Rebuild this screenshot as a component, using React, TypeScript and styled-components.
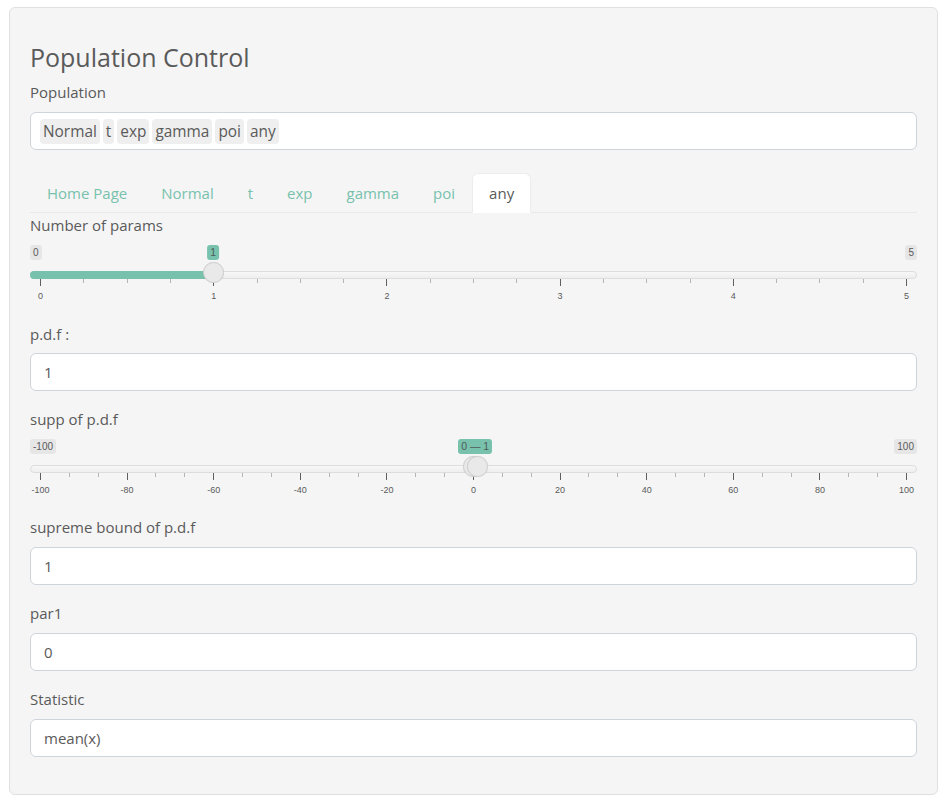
import React from "react";
import styled, { createGlobalStyle } from "styled-components";

const GlobalStyle = createGlobalStyle`
  html, body { margin: 0; padding: 0; background: #ffffff; }
  body {
    font-family: "Open Sans", "Noto Sans", "Liberation Sans", sans-serif;
    color: #5a5a5a;
  }
  * { box-sizing: border-box; }
`;

const Page = styled.div`
  padding: 7px 4px 6px 9px;
`;

const Panel = styled.div`
  display: flex;
  flex-direction: column;
  background: #f5f5f5;
  border: 1px solid #e0e0e0;
  border-radius: 6px;
  padding: 34px 20px 37px;
`;

const Title = styled.h3`
  margin: 0 0 8px;
  font-size: 25px;
  font-weight: 500;
  line-height: 31px;
  color: #5a5a5a;
`;

const Stack = styled.div`
  display: flex;
  flex-direction: column;
  gap: 17px;
`;

const Field = styled.div<{ $extra?: number }>`
  display: flex;
  flex-direction: column;
  padding-bottom: ${(p) => p.$extra ?? 0}px;
`;

const Label = styled.label<{ $mb?: number }>`
  display: block;
  font-size: 15px;
  line-height: 22px;
  margin-bottom: ${(p) => (p.$mb ?? 9)}px;
  color: #5a5a5a;
`;

const TextInput = styled.input`
  display: block;
  width: 100%;
  height: 38px;
  border: 1px solid #ced4da;
  border-radius: 6px;
  background: #ffffff;
  padding: 0 13px;
  font-family: inherit;
  font-size: 15px;
  color: #5a5a5a;
  outline: none;
`;

const SelectBox = styled.div`
  display: flex;
  align-items: center;
  gap: 3px;
  height: 38px;
  border: 1px solid #ced4da;
  border-radius: 6px;
  background: #ffffff;
  padding: 0 9px;
`;

const Chip = styled.span`
  display: inline-block;
  height: 25px;
  line-height: 25px;
  padding: 0 3px;
  border-radius: 4px;
  background: #efefef;
  font-size: 15.4px;
  color: #5a5a5a;
`;

const TabList = styled.ul`
  display: flex;
  list-style: none;
  margin: 17px 0 0;
  padding: 0;
  border-bottom: 1px solid #e9e9e9;
`;

const Tab = styled.li<{ $active?: boolean }>`
  padding: 8px 16px;
  margin-bottom: -1px;
  border: 1px solid ${(p) => (p.$active ? "#ececec" : "transparent")};
  border-bottom-color: ${(p) => (p.$active ? "#ffffff" : "transparent")};
  border-radius: 6px 6px 0 0;
  background: ${(p) => (p.$active ? "#ffffff" : "transparent")};
  font-size: 15px;
  line-height: 22px;
  color: ${(p) => (p.$active ? "#5a5a5a" : "#78c2ad")};
`;

const TabBody = styled(Stack)`
  padding-top: 1px;
`;

/* ---------- slider (ion.rangeSlider look) ---------- */

const SliderWrap = styled.div`
  position: relative;
  height: 65px;
  font-family: "Liberation Sans", Arial, sans-serif;
`;

const EdgeTag = styled.span<{ $side: "left" | "right" }>`
  position: absolute;
  top: 9px;
  ${(p) => (p.$side === "left" ? "left: 0;" : "right: 0;")}
  height: 15px;
  line-height: 15px;
  padding: 0 3px;
  font-size: 10px;
  color: #5a5a5a;
  background: #e6e6e6;
  border-radius: 3px;
`;

const ValueTag = styled.span`
  position: absolute;
  top: 9px;
  transform: translateX(-50%);
  height: 15px;
  line-height: 15px;
  padding: 0 3px;
  font-size: 10.5px;
  color: #4f5b57;
  background: #78c2ad;
  border-radius: 3px;
  white-space: nowrap;
`;

const Track = styled.div`
  position: absolute;
  top: 35px;
  left: 0;
  right: 0;
  height: 8px;
  border: 1px solid #dddddd;
  border-radius: 4px;
  background: linear-gradient(#f7f7f7, #eeeeee);
`;

const Bar = styled.div`
  position: absolute;
  top: 35px;
  height: 8px;
  background: #78c2ad;
  border-radius: 4px;
`;

const Handle = styled.div`
  position: absolute;
  top: 26px;
  width: 21px;
  height: 21px;
  margin-left: -10.5px;
  border-radius: 50%;
  background: #e9e9e9;
  border: 1px solid #cfcfcf;
  box-shadow: 0 0 1px rgba(0, 0, 0, 0.1);
`;

const Grid = styled.div`
  position: absolute;
  top: 43px;
  left: 10px;
  right: 11px;
  height: 22px;
`;

const Tick = styled.span<{ $major?: boolean }>`
  position: absolute;
  top: 0;
  width: 1px;
  height: ${(p) => (p.$major ? 7 : 4)}px;
  background: ${(p) => (p.$major ? "#5f5f5f" : "#b5b5b5")};
`;

const TickText = styled.span`
  position: absolute;
  top: 12px;
  transform: translateX(-50%);
  font-size: 9px;
  line-height: 11px;
  color: #5a5a5a;
  white-space: nowrap;
`;

type SliderProps = {
  min: number;
  max: number;
  values: number[];
  majors: number;
  minorsPer: number;
};

const pos = (p: number) => `calc(10px + (100% - 21px) * ${p})`;

function Slider({ min, max, values, majors, minorsPer }: SliderProps) {
  const frac = (v: number) => (v - min) / (max - min);
  const ticks: { p: number; major: boolean; label?: string }[] = [];
  const steps = majors * (minorsPer + 1);
  for (let i = 0; i <= steps; i++) {
    const major = i % (minorsPer + 1) === 0;
    const v = min + ((max - min) * i) / steps;
    ticks.push({ p: i / steps, major, label: major ? String(Math.round(v)) : undefined });
  }
  const isRange = values.length > 1;
  const a = frac(values[0]);
  const b = isRange ? frac(values[1]) : a;
  const tagText = isRange ? `${values[0]} \u2014 ${values[1]}` : String(values[0]);
  const tagP = isRange ? (a + b) / 2 : a;
  return (
    <SliderWrap>
      <EdgeTag $side="left">{min}</EdgeTag>
      <EdgeTag $side="right">{max}</EdgeTag>
      <ValueTag style={{ left: pos(tagP) }}>{tagText}</ValueTag>
      <Track />
      {isRange ? (
        <Bar style={{ left: pos(a), width: `calc((100% - 21px) * ${b - a})` }} />
      ) : (
        <Bar style={{ left: 0, width: pos(a) }} />
      )}
      <Grid>
        {ticks.map((t, i) => (
          <React.Fragment key={i}>
            <Tick $major={t.major} style={{ left: `${t.p * 100}%` }} />
            {t.label !== undefined && (
              <TickText style={{ left: `calc(${t.p * 100}% + 0.5px)` }}>{t.label}</TickText>
            )}
          </React.Fragment>
        ))}
      </Grid>
      {values.map((v, i) => (
        <Handle key={i} style={{ left: pos(frac(v)) }} />
      ))}
    </SliderWrap>
  );
}

const tabs = ["Home Page", "Normal", "t", "exp", "gamma", "poi", "any"];
const chips = ["Normal", "t", "exp", "gamma", "poi", "any"];

export default function App() {
  return (
    <Page>
      <GlobalStyle />
      <Panel>
        <Title>Population Control</Title>
        <Field $extra={6}>
          <Label>Population</Label>
          <SelectBox>
            {chips.map((c) => (
              <Chip key={c}>{c}</Chip>
            ))}
          </SelectBox>
        </Field>
        <TabList>
          {tabs.map((t) => (
            <Tab key={t} $active={t === "any"}>
              {t}
            </Tab>
          ))}
        </TabList>
        <TabBody>
          <Field $extra={5}>
            <Label $mb={0}>Number of params</Label>
            <Slider min={0} max={5} values={[1]} majors={5} minorsPer={3} />
          </Field>
          <Field>
            <Label $mb={8}>p.d.f :</Label>
            <TextInput readOnly value="1" />
          </Field>
          <Field $extra={4}>
            <Label $mb={0}>supp of p.d.f</Label>
            <Slider min={-100} max={100} values={[0, 1]} majors={10} minorsPer={2} />
          </Field>
          <Field>
            <Label>supreme bound of p.d.f</Label>
            <TextInput readOnly value="1" />
          </Field>
          <Field>
            <Label>par1</Label>
            <TextInput readOnly value="0" />
          </Field>
          <Field>
            <Label>Statistic</Label>
            <TextInput readOnly value="mean(x)" />
          </Field>
        </TabBody>
      </Panel>
    </Page>
  );
}
